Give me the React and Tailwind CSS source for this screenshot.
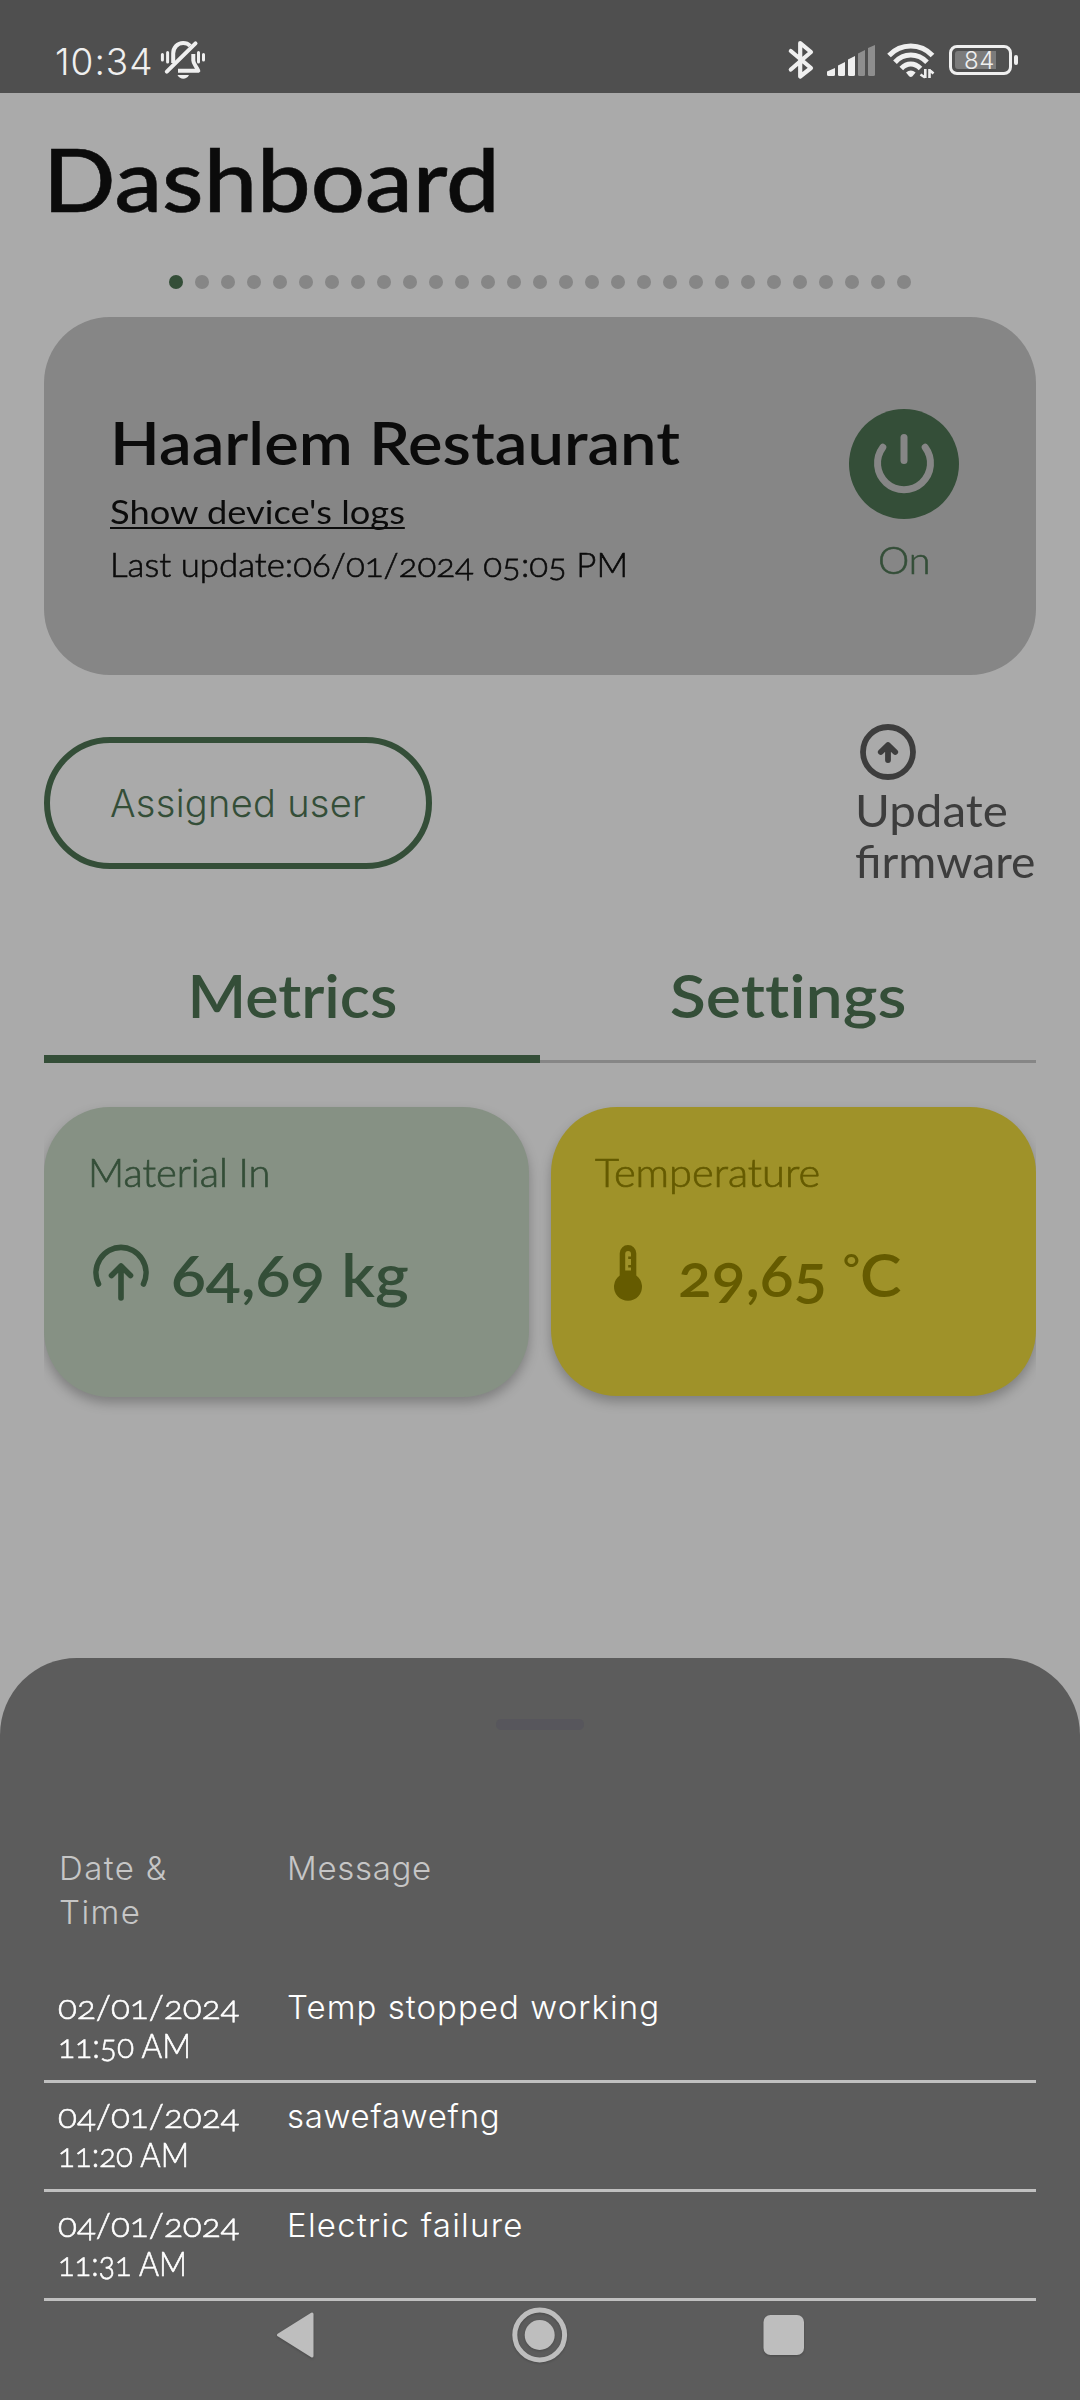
const logs = [
  { date: "02/01/2024", time: "11:50 AM", message: "Temp stopped working", timeScale: "scale-x-[0.96]", spacing: "tracking-[1.05px]" },
  { date: "04/01/2024", time: "11:20 AM", message: "sawefawefng", timeScale: "scale-x-[0.945]", spacing: "tracking-[0.7px]" },
  { date: "04/01/2024", time: "11:31 AM", message: "Electric failure", timeScale: "scale-x-[0.93]", spacing: "tracking-[1.25px]" },
];

function BellOff() {
  return (
    <svg className="block h-[42px] w-[46px]" viewBox="160 40 46 42" fill="none" stroke="#efefef" strokeWidth="4" strokeLinecap="round" strokeLinejoin="round">
      <path d="M173.2 64V54.5C173.2 48.5 177.5 44 183.2 44c2.8 0 5.2 1 7 2.8" strokeLinecap="butt" />
      <path d="M166.8 72.6 195.5 44.4" />
      <path d="M193.3 55v6.5c0 3 2.5 5 5 10.3H178" strokeLinecap="butt" />
      <path d="M177.5 76h11.5c-2.5 5-9 5-11.5 0z" fill="#efefef" stroke="none" />
      <path d="M162.4 55.5v5.5M167.6 53.5v9.5M198.5 53.5v9.5M203.5 55.5v5.5" strokeWidth="3" />
    </svg>
  );
}

function Bluetooth() {
  return (
    <svg className="block h-[42px] w-[28px]" viewBox="787 39 28 42" fill="none" stroke="#efefef" strokeWidth="4.2" strokeLinecap="round" strokeLinejoin="round">
      <path d="M790.8 51 811 68 800.2 76.5V43L811 52 790.8 69.5" />
    </svg>
  );
}

function Signal() {
  return (
    <svg className="block h-[42px] w-[50px]" viewBox="826 39 50 42" fill="#efefef">
      <path d="M827 71.5 835 68V74.5Q835 76 833.5 76H828.5Q827 76 827 74.5z" />
      <path d="M838 65.5 845 62V74.5Q845 76 843.5 76H839.5Q838 76 838 74.5z" />
      <path d="M848 59.5 855 56V74.5Q855 76 853.5 76H849.5Q848 76 848 74.5z" />
      <path d="M858 53.5 865 50V74.5Q865 76 863.5 76H859.5Q858 76 858 74.5z" fill="#8e8e8e" />
      <path d="M868 48 875 45V74.5Q875 76 873.5 76H869.5Q868 76 868 74.5z" fill="#8e8e8e" />
    </svg>
  );
}

function Wifi() {
  return (
    <svg className="block h-[42px] w-[48px]" viewBox="887 39 48 42" fill="none" stroke="#efefef" strokeWidth="5">
      <path d="M889 55.5Q898 46 910.8 46T932.5 55.5" />
      <path d="M895 62.2Q901.5 55 910.8 55T927 62.2" />
      <path d="M901.3 68.5Q905.5 64 910.8 64T920.5 68.5" />
      <path d="M906 72.5Q910.8 68.5 915.6 72.5L912.5 76.3Q910.8 77.7 909.1 76.3z" fill="#efefef" stroke="none" />
      <path d="M925.3 69v9M929.5 69v9M920.5 74.5l4.5 3M929.5 70l4 3.5" strokeWidth="2.6" />
    </svg>
  );
}

function Battery() {
  return (
    <div className="flex items-center gap-[2px]">
      <div className="h-[30px] w-[63px] rounded-[8px] border-3 border-[#efefef] p-[3px]">
        <div className="h-[18px] w-[41px] rounded-l-[3px] bg-[#7b7b7b] pl-[9px] text-[24px] leading-[20px] font-light tracking-[0.5px] text-[#efefef]">84</div>
      </div>
      <div className="h-[10px] w-[4px] rounded-[2px] bg-[#efefef]" />
    </div>
  );
}

function StatusBar() {
  return (
    <header className="flex h-[93px] bg-[#4f4f4f] pt-[39px] pl-[55px] text-[#efefef]">
      <div className="w-[105px] pt-[0.5px] text-[37px] leading-[44px] font-light tracking-[1px]">10:34</div>
      <BellOff />
      <div className="ml-auto flex h-[42px] items-center pr-[62px]">
        <Bluetooth />
        <div className="ml-[11px]"><Signal /></div>
        <div className="ml-[11px]"><Wifi /></div>
        <div className="ml-[14px]"><Battery /></div>
      </div>
    </header>
  );
}

function DeviceCard() {
  return (
    <section className="mt-[28px] flex h-[358px] justify-between rounded-[66px] bg-[#868686] pr-[77px] pl-[66px] font-[Lato,sans-serif] text-[#0b0b0b]">
      <div className="pt-[95px]">
        <h2 className="origin-left scale-x-[1.084] text-[60px] leading-[60px] font-semibold whitespace-nowrap">Haarlem Restaurant</h2>
        <div className="mt-[19px] flex h-[40px]">
          <a className="h-[38px] origin-left scale-x-[1.1] border-b-2 border-[#0b0b0b] text-[33px] leading-[40px] whitespace-nowrap">Show device's logs</a>
        </div>
        <p className="mt-[13px] origin-left scale-x-[1.055] text-[33px] leading-[40px] font-light whitespace-nowrap oldstyle-nums [-webkit-text-stroke:0.6px]">Last update:06/01/2024 05:05 PM</p>
      </div>
      <div className="flex flex-col items-center pt-[92px] text-[#344e38]">
        <div className="flex size-[110px] items-center justify-center rounded-full bg-[#344e38]">
          <svg className="size-[66px]" viewBox="0 0 66 66" fill="none" stroke="#868686" strokeWidth="7" strokeLinecap="round">
            <path d="M33 6.5V29.5" />
            <path d="M11.8 16.3A26.5 26.5 0 1 0 54.2 16.3" />
          </svg>
        </div>
        <span className="mt-[15px] ml-px scale-x-[1.04] text-[38px] leading-[50px] font-light [-webkit-text-stroke:0.6px]">On</span>
      </div>
    </section>
  );
}

function ActionRow() {
  return (
    <div className="mt-[49px] flex h-[162px] justify-between">
      <button className="mt-[13px] h-[132px] w-[388px] rounded-full border-6 border-[#344e38] text-[38px] font-light tracking-[0.3px] whitespace-nowrap text-[#344e38]">Assigned user</button>
      <div className="w-[182px] font-[Lato,sans-serif] text-[44px] leading-[51px] text-[#3d3d3d]">
        <svg className="mb-[5px] ml-[6px] block size-[56px]" viewBox="0 0 56 56" fill="none" stroke="#3d3d3d" strokeWidth="5.8" strokeLinecap="round" strokeLinejoin="round">
          <circle cx="28" cy="28" r="25" />
          <path d="M28 36V22M20.8 28 28 21 35.2 28" />
        </svg>
        <div className="ml-px origin-left scale-x-[1.08]">Update</div>
        <div className="ml-px origin-left scale-x-[1.05]">firmware</div>
      </div>
    </div>
  );
}

function Tabs() {
  return (
    <nav className="mt-[74px] grid h-[103px] grid-cols-2 text-center font-[Lato,sans-serif] text-[60px] leading-[70px] font-semibold text-[#344e38] [font-variant-ligatures:none]">
      <div className="border-b-8 border-[#344e38]"><span className="inline-block scale-x-[1.045]">Metrics</span></div>
      <div className="border-b-3 border-[#868686]"><span className="inline-block scale-x-[1.105]">Settings</span></div>
    </nav>
  );
}

function MetricCards() {
  return (
    <section className="mt-[44px] flex gap-[22px] overflow-x-clip font-[Lato,sans-serif]">
      <article className="h-[290px] w-[485px] rounded-[66px] bg-[#869184] pt-[41px] pl-[43px] text-[#344e38] shadow-[0_6px_12px_rgba(0,0,0,0.25)]">
        <h3 className="ml-px origin-left scale-x-[1.02] text-[39px] leading-[48px] font-light [-webkit-text-stroke:0.7px]">Material In</h3>
        <div className="mt-[42px] flex h-[72px]">
          <svg className="ml-[6px] h-[72px] w-[56px]" viewBox="93 1238 56 72" fill="none" stroke="#344e38" strokeWidth="5.6" strokeLinecap="round" strokeLinejoin="round">
            <path d="M98.5 1284A25 25.5 0 1 1 143.5 1284" />
            <path d="M121 1298V1266M111.5 1275.5 121 1266 130.5 1275.5" />
          </svg>
          <div className="ml-[22px] origin-left scale-x-[1.075] text-[60px] leading-[72px] font-semibold whitespace-nowrap oldstyle-nums">64,69 kg</div>
        </div>
      </article>
      <article className="h-[289px] w-[485px] rounded-[66px] bg-[#9f9229] pt-[41px] pl-[43px] text-[#655b00] shadow-[0_6px_12px_rgba(0,0,0,0.25)]">
        <h3 className="ml-px origin-left scale-x-[1.066] text-[39px] leading-[48px] font-light [-webkit-text-stroke:0.7px]">Temperature</h3>
        <div className="mt-[42px] flex h-[72px]">
          <svg className="ml-[6px] h-[72px] w-[56px]" viewBox="600 1238 56 72" fill="#655b00">
            <path fillRule="evenodd" d="M619.7 1253.3a8.3 8.3 0 0 1 16.6 0V1275.5a14 14 0 1 1-16.6 0zM625.2 1254V1270.5H631V1267.5H628.2V1265H631V1259H628.2V1256.5H631V1254a2.9 2.9 0 0 0-5.8 0z" />
          </svg>
          <div className="ml-[22px] origin-left scale-x-[1.04] text-[60px] leading-[72px] font-semibold whitespace-nowrap oldstyle-nums">
            29,65 <span className="align-[14px] text-[40px] leading-[0px]">°</span>C
          </div>
        </div>
      </article>
    </section>
  );
}

function LogSheet() {
  return (
    <section className="flex h-[742px] flex-col rounded-t-[77px] bg-[#5c5c5c] px-[44px] pt-[61px]">
      <div className="h-[11px] w-[88px] shrink-0 self-center rounded-[5px] bg-[#57565c]" />
      <div className="mt-[116px] grid h-[88px] grid-cols-[228px_1fr] pl-[15px] text-[33px] leading-[44px] font-light text-[#c6c6c6]">
        <div className="w-[160px] tracking-[1.4px]">Date & Time</div>
        <div className="tracking-[0.7px]">Message</div>
      </div>
      <div className="mt-[40px]">
        {logs.map((log) => (
          <div key={log.time} className="grid h-[109px] grid-cols-[231px_1fr] border-b-3 border-[#c0c0c0] pt-[13px] pl-[12px] text-[33px] leading-[39px] text-white">
            <div className="w-[172px] pl-[2px] font-[Lato,sans-serif] font-light oldstyle-nums [-webkit-text-stroke:0.6px]">
              <div className="origin-left scale-x-[1.06]">{log.date}</div>
              <div className={`origin-left ${log.timeScale}`}>{log.time}</div>
            </div>
            <div className={`pt-px font-light ${log.spacing}`}>{log.message}</div>
          </div>
        ))}
      </div>
      <SystemNav />
    </section>
  );
}

function SystemNav() {
  return (
    <div className="flex h-[99px] justify-center">
      <svg className="h-[99px] w-[540px] drop-shadow-[0_1px_1px_rgba(0,0,0,0.2)]" viewBox="270 2301 540 99" fill="#bebebe">
        <path d="M278.5 2335 312 2314V2356z" stroke="#bebebe" strokeWidth="3" strokeLinejoin="round" />
        <circle cx="539.7" cy="2335" r="24.9" fill="none" stroke="#bebebe" strokeWidth="5" />
        <circle cx="539.7" cy="2335" r="15" />
        <rect x="763.5" y="2315" width="40.5" height="40" rx="7" />
      </svg>
    </div>
  );
}

export default function App() {
  return (
    <div className="h-[2400px] w-[1080px] overflow-hidden bg-[#aaaaaa] font-[Inter,sans-serif]">
      <div className="h-[1658px]">
        <StatusBar />
        <main className="px-[44px] pt-[36px]">
          <h1 className="-ml-px origin-left scale-x-[1.098] font-[Lato,sans-serif] text-[87px] leading-[100px] font-medium text-[#0b0b0b] [-webkit-text-stroke:0.6px]">Dashboard</h1>
          <div className="mt-[46px] flex justify-center gap-[12px]">
            {Array.from({ length: 29 }, (_, i) => (
              <span key={i} className={i === 0 ? "size-[14px] rounded-full bg-[#344e38]" : "size-[14px] rounded-full bg-[#868686]"} />
            ))}
          </div>
          <DeviceCard />
          <ActionRow />
          <Tabs />
          <MetricCards />
        </main>
      </div>
      <LogSheet />
    </div>
  );
}
